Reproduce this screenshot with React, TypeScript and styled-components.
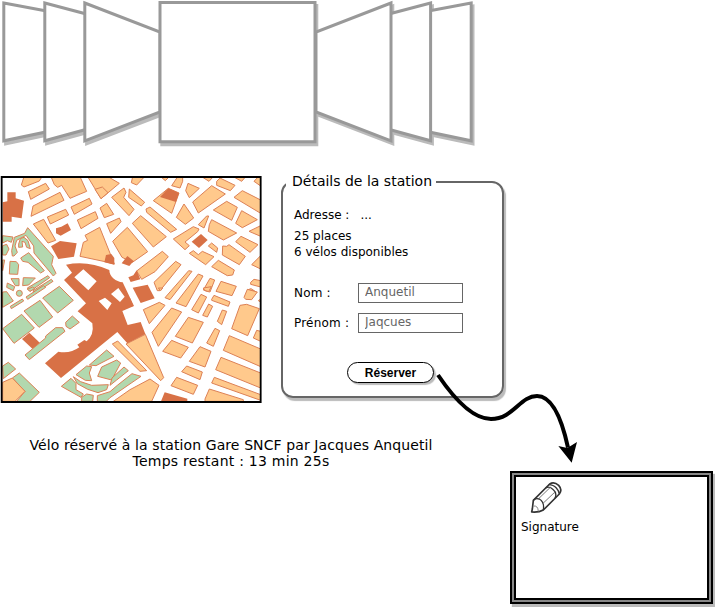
import React from "react";
import styled, { createGlobalStyle } from "styled-components";

const GlobalStyle = createGlobalStyle`
  body { margin: 0; background: #fff; }
  * { box-sizing: border-box; }
`;

const Page = styled.main`
  position: relative;
  width: 715px;
  height: 607px;
  overflow: hidden;
  display: flex;
  flex-direction: column;
  background: #fff;
  color: #000;
  font-family: Verdana, "DejaVu Sans", sans-serif;
  font-size: 12px;
`;

const Carousel = styled.svg`
  display: block;
  flex: none;
`;

const StationRow = styled.section`
  display: flex;
  align-items: flex-start;
  flex: none;
  height: 236px;
  gap: 17px;
`;

const MapDrawing = styled.svg`
  display: block;
  flex: none;
`;

const Details = styled.form`
  width: 223px;
  height: 217px;
  margin-top: 7px;
  padding-left: 11px;
  border: 2px solid #666;
  border-radius: 12px;
  box-shadow: 2px 3px 1px #bbb;
  display: flex;
  flex-direction: column;
  align-items: flex-start;
`;

const Legend = styled.h1`
  margin: -13px 0 0 -8px;
  padding: 0 4px 0 6px;
  height: 22px;
  line-height: 22px;
  background: #fff;
  font-size: 14px;
  font-weight: 400;
  white-space: nowrap;
  letter-spacing: 0;
`;

const Line = styled.p<{ $top: number; $gap?: number }>`
  margin: ${(p) => p.$top}px 0 0;
  display: flex;
  gap: ${(p) => p.$gap ?? 0}px;
  height: 16px;
  line-height: 16px;
  white-space: nowrap;
`;

const Field = styled.label<{ $top: number }>`
  display: flex;
  align-items: center;
  height: 20px;
  margin-top: ${(p) => p.$top}px;
`;

const FieldName = styled.span`
  width: 64px;
  white-space: nowrap;
  letter-spacing: 0.2px;
`;

const Input = styled.input`
  width: 105px;
  height: 20px;
  padding: 0 0 2px 6px;
  border: 1px solid #666;
  border-radius: 0;
  background: #fff;
  color: #666;
  font: inherit;
  outline: none;
`;

const Reserve = styled.button`
  width: 87px;
  height: 21px;
  margin: 29px 0 0 53px;
  padding: 0;
  border: 1px solid #000;
  border-radius: 11px;
  background: #fff;
  color: #000;
  box-shadow: 2px 2px 1px #bbb;
  font: bold 12px "Liberation Sans", Arial, sans-serif;
`;

const Footer = styled.section`
  display: flex;
  align-items: flex-start;
  flex: none;
`;

const Status = styled.p`
  width: 462px;
  margin: 27px 48px 0 0;
  text-align: center;
  font-size: 14px;
  line-height: 16px;
  white-space: nowrap;
  letter-spacing: 0.1px;
`;

const Remaining = styled.span`
  letter-spacing: 0.24px;
`;

const SignatureFrame = styled.div`
  width: 203px;
  height: 133px;
  margin-top: 61px;
  border: 2px solid #000;
  padding: 2px;
  background: #888;
  box-shadow: 2px 3px 1px #bbb;
`;

const SignaturePad = styled.div`
  height: 100%;
  border: 2px solid #000;
  background: #fff;
  padding: 4px 0 0 5px;
  display: flex;
  flex-direction: column;
  line-height: 16px;
`;

const Pencil = styled.svg`
  display: block;
  margin: 0 0 6px 8px;
`;

const Arrow = styled.svg`
  position: absolute;
  left: 430px;
  top: 365px;
  pointer-events: none;
`;

const CARDS = [
  "M3.8 3L84 18V124L3.8 140.8Z",
  "M44.8 3L124 24V119L44.8 140.8Z",
  "M84.8 3L160 32V112L84.8 140.8Z",
  "M471.2 3L391 18V124L471.2 140.8Z",
  "M430.6 3L351 24V119L430.6 140.8Z",
  "M391 3L316 32V112L391 140.8Z",
  "M160 2.5H315V141.8H160Z",
];

type Block = [kind: "o" | "g" | "d" | "w", points: string];
type Sector = { x: number; y: number; blocks: Block[] };

const FILL = { o: "#ffc98c", g: "#b2d8ae", d: "#d87146", w: "#fff" };

const SECTORS: Sector[] = [
  {
    x: 0,
    y: 0,
    blocks: [
      ["o", "72,8 64,33 72,39 118,21 126,8"],
      ["o", "85,53 137,28 148,45 92,76"],
      ["o", "99,96 180,55 192,79 93,127"],
      ["o", "153,8 163,32 173,40 185,34 210,73 260,52 240,8"],
      ["o", "263,8 303,74 358,28 324,8"],
      ["o", "285,46 307,39 324,56 303,74"],
      ["o", "213,99 268,73 276,90 223,121"],
      ["o", "232,138 286,113 294,133 243,164"],
      ["o", "300,102 320,88 341,121 313,131"],
      ["o", "142,129 197,106 206,123 151,150"],
      ["o", "100,150 131,136 167,199 144,207"],
      ["o", "320,149 358,132 363,143 332,178"],
      ["o", "335,70 372,42 378,55 371,70 402,106 387,125"],
      ["o", "388,45 434,85 424,96 386,70"],
      ["o", "240,247 250,205 263,199 255,184 299,160 343,270 315,263"],
      ["d", "313,265 318,243 334,240 343,252 343,272"],
      ["o", "338,202 382,160 443,233 397,265 366,250"],
      ["d", "22,55 47,55 47,73 72,80 65,133 35,128 35,143 8,143 8,85 22,82"],
      ["d", "168,163 184,158 203,148 213,168 182,185 168,178"],
      ["d", "153,217 180,201 230,208 222,248 175,255"],
      ["g", "8,185 39,189 34,205 22,200 8,207"],
      ["g", "8,215 20,211 27,225 18,243 8,243"],
      ["g", "35,230 43,190 74,178 83,161 160,247 155,272 168,298 160,306 102,237 101,216 78,184 50,199 45,216 52,235 42,246 37,246"],
      ["g", "56,210 61,194 72,190 84,200 91,224 80,220 75,205 66,202 68,219 56,220"],
      ["g", "62,252 86,236 133,290 122,297 84,265 68,262"],
      ["g", "30,262 49,263 56,272 53,301 28,300"],
      ["g", "8,258 14,258 8,290"],
      ["g", "68,335 70,311 106,312 86,333"],
      ["g", "33,314 57,314 57,335 46,335"],
      ["g", "22,327 44,338 40,350 20,340"],
      ["g", "82,342 144,305 149,311 90,352"],
      ["g", "99,350 154,316 159,322 103,359"],
    ],
  },
  {
    x: 390,
    y: 0,
    blocks: [
      ["o", "4,26 20,33 44,8 8,8"],
      ["o", "92,8 118,8 106,20"],
      ["o", "125,35 143,8 158,8 158,22 150,42"],
      ["o", "70,80 115,43 147,57 125,118"],
      ["d", "90,69 115,43 147,57 138,84"],
      ["o", "174,28 208,43 178,71 167,50"],
      ["o", "188,84 245,35 286,60 205,117"],
      ["o", "215,8 250,8 237,22"],
      ["o", "260,22 270,12 315,34 301,50 260,34"],
      ["o", "310,8 347,8 335,22"],
      ["o", "372,22 385,8 392,8 392,36"],
      ["o", "312,70 337,50 392,78 392,118"],
      ["o", "250,108 290,82 322,100 305,139"],
      ["o", "335,110 382,137 337,161 317,148"],
      ["o", "392,155 392,187 357,172"],
      ["o", "162,90 191,132 166,151 139,130"],
      ["o", "205,152 230,126 236,126 222,162"],
      ["o", "238,152 245,137 320,177 280,198 235,172"],
      ["o", "48,105 60,99 140,166 122,175 50,115"],
      ["o", "7,148 32,125 109,188 70,219"],
      ["o", "130,195 190,158 207,165 203,173 165,204 178,215 165,227"],
      ["d", "185,203 213,180 233,198 207,222"],
      ["o", "235,216 245,207 263,222 260,235"],
      ["o", "278,216 290,217 297,212 346,247 328,272 277,243"],
      ["o", "178,238 190,230 205,242 217,232 252,248 227,272"],
      ["o", "245,278 265,259 313,288 308,303 292,305"],
      ["o", "317,203 333,187 384,212 360,235"],
      ["o", "365,272 392,245 392,285"],
      ["o", "362,325 372,316 392,320 392,339 362,331"],
      ["o", "72,325 137,262 153,272 90,350 82,350"],
      ["o", "105,371 176,290 186,292 120,377"],
      ["o", "138,387 205,300 219,306 168,398"],
      ["o", "220,348 240,313 254,318 240,354 228,351"],
      ["o", "258,352 273,322 319,337 306,365"],
      ["o", "351,348 363,344 374,351"],
    ],
  },
  {
    x: 0,
    y: 342,
    blocks: [
      ["g", "8,12 20,11 40,39 8,58"],
      ["g", "31,55 67,33 71,39 34,62"],
      ["g", "78,27 130,-7 137,-2 83,34"],
      ["g", "82,4 98,-3 104,2 90,10"],
      ["g", "128,30 178,-5 220,37 173,75"],
      ["g", "72,69 120,37 158,87 117,118"],
      ["g", "8,122 65,79 103,120 42,166"],
      ["d", "66,153 88,134 120,165 98,183"],
      ["g", "75,201 137,150 137,144 167,119 188,119 195,130 88,215"],
      ["g", "197,103 217,84 238,103 210,123 198,115"],
      ["g", "8,234 25,223 47,243 10,272"],
      ["g", "37,270 58,255 118,313 90,340 50,340 75,310"],
      ["o", "8,283 37,270 75,310 45,340 8,340"],
      ["g", "268,231 320,186 342,205 288,233"],
      ["g", "228,260 260,234 275,236 268,255 275,278 256,277"],
      ["g", "293,265 305,237 350,216 362,225 335,276"],
      ["g", "330,292 336,270 372,237 385,248 350,276"],
      ["g", "220,266 242,281 275,292 325,290 320,305 294,314 263,304 232,287"],
      ["g", "184,295 213,271 228,286 228,305 250,318 243,328"],
      ["g", "292,323 330,311 352,292 396,257 423,265 330,329 319,340 292,340"],
      ["g", "245,328 260,318 280,322 278,340 245,340"],
    ],
  },
  {
    x: 120,
    y: 198,
    blocks: [
      ["o", "290,93 367,34 385,50 345,95 305,118"],
      ["d", "265,112 280,106 290,91 301,118 272,126"],
      ["d", "278,143 323,134 344,175 302,189"],
      ["d", "245,70 262,48 281,63 268,78"],
      ["o", "258,312 316,283 371,413 362,422"],
      ["o", "217,312 233,303 320,392 300,394"],
    ],
  },
  {
    x: 390,
    y: 342,
    blocks: [
      ["o", "85,0 92,8 98,0"],
      ["o", "220,0 224,7 236,11 244,-4"],
      ["o", "342,28 352,4 382,12 365,35 347,34"],
      ["o", "392,33 385,38 392,42"],
      ["d", "0,30 10,54 0,57"],
      ["o", "185,65 213,19 230,27 205,75"],
      ["o", "218,82 236,48 248,55 232,87"],
      ["o", "245,34 252,22 300,42 295,55 245,37"],
      ["o", "262,100 277,66 290,70 275,110"],
      ["o", "305,122 330,52 350,49 388,62 353,143"],
      ["o", "370,150 380,127 392,130 392,160"],
      ["o", "230,165 255,121 269,128 250,175"],
      ["o", "280,187 298,143 392,183 392,236"],
      ["o", "136,145 175,88 220,103 187,165"],
      ["o", "98,190 125,157 175,178 152,210"],
      ["o", "178,220 210,176 243,190 225,237"],
      ["o", "66,133 125,60 155,72 85,175"],
      ["o", "40,65 88,43 105,52 58,107"],
      ["o", "155,251 170,234 217,252 210,275"],
      ["o", "123,293 140,268 203,292 190,319"],
      ["o", "257,245 273,208 392,255 392,300"],
      ["o", "245,285 253,268 392,320 392,337"],
      ["o", "225,333 238,303 340,335 340,340 225,340"],
      ["d", "93,340 104,313 172,332 172,340"],
      ["o", "-50,340 0,305 60,273 87,292 65,340"],
    ],
  },
];

function CityMap() {
  return (
    <MapDrawing width="264" height="232" viewBox="0 0 792 696">
      <defs>
        <clipPath id="mapArea">
          <path d="M5 9H782V684H5Z" />
        </clipPath>
      </defs>
      <g clipPath="url(#mapArea)" strokeLinejoin="round">
        {SECTORS.map((s, i) => (
          <g key={i} transform={`translate(${s.x} ${s.y})`}>
            {s.blocks.map(([kind, points]) => (
              <polygon key={points} points={points} fill={FILL[kind]} stroke={kind === "d" ? "none" : "#dc8055"} strokeWidth="3" />
            ))}
          </g>
        ))}
        <g transform="translate(120 198)">
          <path
            fill="#d87146"
            d="M78 74Q142 60 208 90C208 110 228 125 248 127L282 198 247 213 263 255 302 246 316 282 262 310 232 276 63 414 15 370 55 335Q90 342 118 322L112 314 133 300 140 304Q163 285 157 250L113 214 138 190 72 120 96 98Z"
          />
          <path fill="#fff" d="M103 112L130 88 170 124 145 151ZM176 183L195 173 215 190 202 210ZM213 162L235 144 254 170 240 186Z" />
        </g>
        <circle cx="58" cy="358" r="9" fill="#b2d8ae" stroke="#dc8055" strokeWidth="3" />
      </g>
      <path d="M5 9H782V684H5Z" fill="none" stroke="#000" strokeWidth="5.5" />
    </MapDrawing>
  );
}

export default function App() {
  return (
    <>
      <GlobalStyle />
      <Page>
        <Carousel width="480" height="174" viewBox="0 0 480 174" strokeWidth="3">
          <g fill="#bbb" stroke="#bbb" transform="translate(1.8 3)">
            {CARDS.map((d) => (
              <path key={d} d={d} />
            ))}
          </g>
          <g fill="#fff" stroke="#999">
            {CARDS.map((d) => (
              <path key={d} d={d} />
            ))}
          </g>
        </Carousel>
        <StationRow>
          <CityMap />
          <Details onSubmit={(e) => e.preventDefault()}>
            <Legend>Détails de la station</Legend>
            <Line $top={15} $gap={11}>
              <span>Adresse :</span>
              <span>...</span>
            </Line>
            <Line $top={5}>25 places</Line>
            <Line $top={0}>6 vélos disponibles</Line>
            <Field $top={23}>
              <FieldName>Nom :</FieldName>
              <Input defaultValue="Anquetil" />
            </Field>
            <Field $top={10}>
              <FieldName>Prénom :</FieldName>
              <Input defaultValue="Jaqcues" />
            </Field>
            <Reserve type="submit">Réserver</Reserve>
          </Details>
        </StationRow>
        <Footer>
          <Status>
            Vélo réservé à la station Gare SNCF par Jacques Anquetil
            <br />
            <Remaining>Temps restant : 13 min 25s</Remaining>
          </Status>
          <SignatureFrame>
            <SignaturePad>
              <Pencil width="34" height="32" viewBox="0 0 102 96" fill="none" stroke="#333" strokeWidth="5" strokeLinejoin="round">
                <path d="M10 84L13 58 62 9Q75 1 89 13Q101 26 91 39L43 87Q29 95 8 93Z" />
                <path d="M13 58Q19 50 31 54Q47 63 43 87M50 21Q61 14 73 26Q85 36 78 52M59 11Q73 11 82 21Q91 31 91 39" strokeWidth="4" />
                <path d="M29 53L65 18M42 67L79 32" stroke="#777" strokeWidth="3" />
                <path d="M13 75Q27 73 28 91" stroke="#888" strokeWidth="3" />
              </Pencil>
              Signature
            </SignaturePad>
          </SignatureFrame>
        </Footer>
        <Arrow width="150" height="105" viewBox="0 0 450 315">
          <path d="M24 30C85 120 135 162 183 162C250 162 270 93 321 93C365 93 395 160 414 248" fill="none" stroke="#000" strokeWidth="12" />
          <path d="M425 293L385 243 412 249 441 231Z" />
        </Arrow>
      </Page>
    </>
  );
}
